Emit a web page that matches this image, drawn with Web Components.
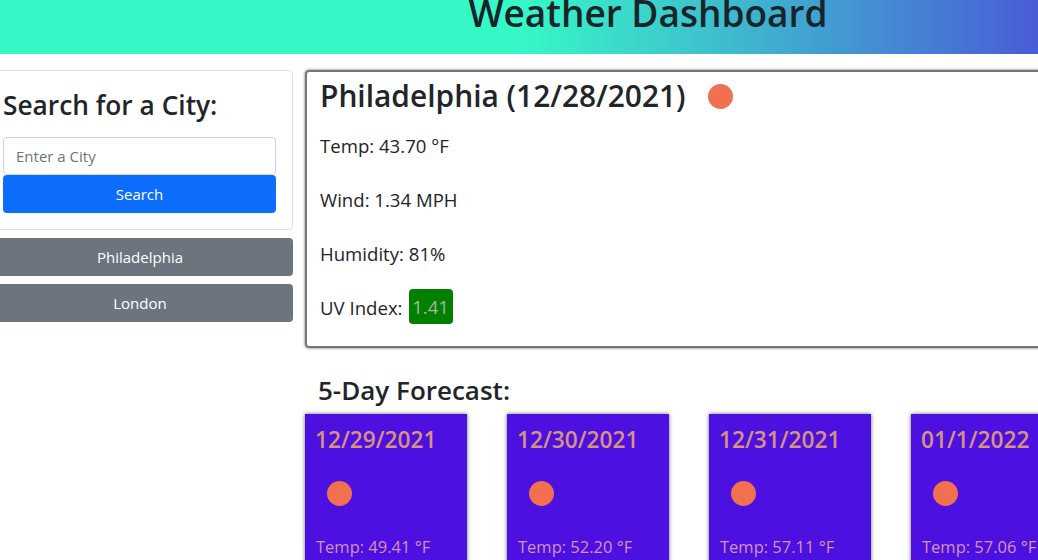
<!DOCTYPE html>
<html>
<head>
<meta charset="utf-8">
<title>Weather Dashboard</title>
<style>
  html, body { margin: 0; height: 560px; overflow: hidden; background: #fff; }
  body { font-family: "Open Sans", "Noto Sans", sans-serif; color: #212529; }
</style>
</head>
<body>
<weather-app></weather-app>

<script>
const FONT = '"Open Sans", "Noto Sans", sans-serif';

class AppHeader extends HTMLElement {
  constructor() {
    super();
    this.attachShadow({ mode: "open" });
    this.shadowRoot.innerHTML = `
      <style>
        :host {
          display: block;
          height: 54px;
          overflow: hidden;
          background: linear-gradient(90deg, #36f8c6 0%, #36f8c6 50%, #3dc8cc 66%, #4a5cd8 100%);
        }
        h1 {
          margin: -11px 0 0;
          padding-left: 258px;
          text-align: center;
          font: 600 37px/48px ${FONT};
          color: #17252b;
        }
      </style>
      <h1><slot></slot></h1>`;
  }
}

class WeatherDot extends HTMLElement {
  constructor() {
    super();
    this.attachShadow({ mode: "open" });
    this.shadowRoot.innerHTML = `
      <style>
        :host {
          display: block;
          width: 25px;
          height: 25px;
          border-radius: 50%;
          background: #f0704f;
        }
      </style>`;
  }
}

class SearchPanel extends HTMLElement {
  constructor() {
    super();
    this.attachShadow({ mode: "open" });
    this.shadowRoot.innerHTML = `
      <style>
        :host {
          display: block;
          box-sizing: border-box;
          height: 160px;
          padding: 16px 16px 16px 15px;
          border: 1px solid #dfdfdf;
          border-radius: 4px;
        }
        h3 {
          margin: 0 0 14px;
          font: 600 26.3px/36px ${FONT};
          color: #212529;
        }
        input {
          display: block;
          box-sizing: border-box;
          width: 100%;
          height: 38px;
          padding: 6px 12px;
          border: 1px solid #ced4da;
          border-radius: 4px;
          font: 15px ${FONT};
          outline: none;
        }
        input::placeholder { color: #6c757d; opacity: 1; }
        button {
          display: block;
          width: 100%;
          height: 38px;
          border: 0;
          border-radius: 4px;
          background: #0d6efd;
          color: #fff;
          font: 15px ${FONT};
        }
      </style>
      <h3>Search for a City:</h3>
      <input type="text" placeholder="Enter a City">
      <button type="button">Search</button>`;
  }
}

class CityButton extends HTMLElement {
  constructor() {
    super();
    this.attachShadow({ mode: "open" });
    this.shadowRoot.innerHTML = `
      <style>
        :host { display: block; }
        button {
          display: block;
          width: 100%;
          height: 38px;
          border: 0;
          border-radius: 4px;
          background: #6c757d;
          color: #fff;
          font: 15px ${FONT};
        }
      </style>
      <button type="button"><slot></slot></button>`;
  }
}

class CurrentWeather extends HTMLElement {
  constructor() {
    super();
    this.attachShadow({ mode: "open" });
    this.shadowRoot.innerHTML = `
      <style>
        :host {
          display: block;
          box-sizing: border-box;
          width: 900px;
          height: 278px;
          padding: 0 13px;
          border: 2px solid #777;
          border-radius: 4px;
          box-shadow: 0 0 3px #666;
        }
        .title {
          display: flex;
          align-items: center;
          gap: 22px;
          height: 47px;
        }
        weather-dot { margin-top: 2px; }
        h2 {
          margin: 0;
          font: 600 29.9px/47px ${FONT};
          color: #212529;
        }
        .rows { padding-top: 13px; }
      </style>
      <div class="title">
        <h2>${this.getAttribute("heading") || ""}</h2>
        <weather-dot></weather-dot>
      </div>
      <div class="rows"><slot></slot></div>`;
  }
}

class WeatherStat extends HTMLElement {
  constructor() {
    super();
    this.attachShadow({ mode: "open" });
    this.shadowRoot.innerHTML = `
      <style>
        :host {
          display: flex;
          align-items: center;
          height: 27px;
          margin-bottom: 27px;
          font: 18.6px/27px ${FONT};
          color: #212529;
        }
      </style>
      <slot></slot>`;
  }
}

class UvBadge extends HTMLElement {
  constructor() {
    super();
    this.attachShadow({ mode: "open" });
    this.shadowRoot.innerHTML = `
      <style>
        :host {
          display: block;
          box-sizing: border-box;
          width: 44px;
          height: 35px;
          margin: -2px 0 0 6px;
          border-radius: 4px;
          background: #008000;
          color: #a3b99b;
          text-align: center;
          font: 18.6px/35px ${FONT};
        }
      </style>
      <slot></slot>`;
  }
}

class ForecastCard extends HTMLElement {
  constructor() {
    super();
    this.attachShadow({ mode: "open" });
    this.shadowRoot.innerHTML = `
      <style>
        :host {
          display: block;
          flex: none;
          box-sizing: border-box;
          width: 162px;
          height: 200px;
          padding: 10px 10px;
          background: #4c10e0;
          box-shadow: 0 0 4px #6a6a6a;
        }
        h4 {
          margin: 0;
          font: 600 22.7px/32px ${FONT};
          color: #d6937f;
        }
        weather-dot { margin: 25px 0 0 12px; }
        p {
          margin: 27px 0 0 1px;
          font: 16.5px/27px ${FONT};
          color: #d692b8;
        }
      </style>
      <h4>${this.getAttribute("date") || ""}</h4>
      <weather-dot></weather-dot>
      <p>Temp: ${this.getAttribute("temp") || ""} °F</p>`;
  }
}

class WeatherApp extends HTMLElement {
  constructor() {
    super();
    this.attachShadow({ mode: "open" });
    this.shadowRoot.innerHTML = `
      <style>
        :host { display: block; }
        .layout {
          display: grid;
          grid-template-columns: 306px 900px;
          column-gap: 12px;
          margin: 16px 0 0 -13px;
          align-items: start;
        }
        .side { display: flex; flex-direction: column; gap: 8px; }
        h3 {
          margin: 24px 0 6px 13px;
          font: 600 26px/36px ${FONT};
          color: #212529;
        }
        .cards { display: flex; gap: 40px; }
      </style>
      <app-header>Weather Dashboard</app-header>
      <div class="layout">
        <div class="side">
          <search-panel></search-panel>
          <city-button>Philadelphia</city-button>
          <city-button>London</city-button>
        </div>
        <div>
          <current-weather heading="Philadelphia (12/28/2021)">
            <weather-stat>Temp: 43.70 °F</weather-stat>
            <weather-stat>Wind: 1.34 MPH</weather-stat>
            <weather-stat>Humidity: 81%</weather-stat>
            <weather-stat>UV Index:<uv-badge>1.41</uv-badge></weather-stat>
          </current-weather>
          <h3>5-Day Forecast:</h3>
          <div class="cards">
            <forecast-card date="12/29/2021" temp="49.41"></forecast-card>
            <forecast-card date="12/30/2021" temp="52.20"></forecast-card>
            <forecast-card date="12/31/2021" temp="57.11"></forecast-card>
            <forecast-card date="01/1/2022" temp="57.06"></forecast-card>
          </div>
        </div>
      </div>`;
  }
}

customElements.define("app-header", AppHeader);
customElements.define("weather-dot", WeatherDot);
customElements.define("search-panel", SearchPanel);
customElements.define("city-button", CityButton);
customElements.define("current-weather", CurrentWeather);
customElements.define("weather-stat", WeatherStat);
customElements.define("uv-badge", UvBadge);
customElements.define("forecast-card", ForecastCard);
customElements.define("weather-app", WeatherApp);
</script>
</body>
</html>
